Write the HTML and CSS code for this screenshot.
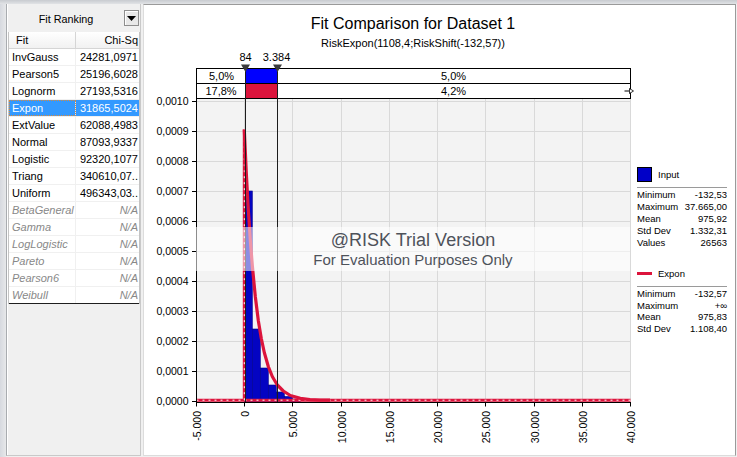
FILE: index.html
```html
<!DOCTYPE html>
<html lang="en">
<head>
<meta charset="utf-8">
<title>Fit Comparison for Dataset 1</title>
<link rel="stylesheet" href="styles.css">
</head>
<body>
<div class="app">
  <aside class="ranking">
    <div class="rank-head">
      <span class="rank-title">Fit Ranking</span>
      <button class="drop" type="button" aria-label="Fit ranking options">
        <svg width="9" height="5" viewBox="0 0 9 5"><path d="M0 0H9L4.5 5Z" fill="#000"/></svg>
      </button>
    </div>
    <div class="fit-table">
      <div class="row head"><span class="c1">Fit</span><span class="c2">Chi-Sq</span></div>
      <div class="row"><span class="c1">InvGauss</span><span class="c2">24281,0971</span></div>
      <div class="row"><span class="c1">Pearson5</span><span class="c2">25196,6028</span></div>
      <div class="row"><span class="c1">Lognorm</span><span class="c2">27193,5316</span></div>
      <div class="row sel"><span class="c1">Expon</span><span class="c2">31865,5024</span></div>
      <div class="row"><span class="c1">ExtValue</span><span class="c2">62088,4983</span></div>
      <div class="row"><span class="c1">Normal</span><span class="c2">87093,9337</span></div>
      <div class="row"><span class="c1">Logistic</span><span class="c2">92320,1077</span></div>
      <div class="row"><span class="c1">Triang</span><span class="c2">340610,07..</span></div>
      <div class="row"><span class="c1">Uniform</span><span class="c2">496343,03..</span></div>
      <div class="row na"><span class="c1">BetaGeneral</span><span class="c2">N/A</span></div>
      <div class="row na"><span class="c1">Gamma</span><span class="c2">N/A</span></div>
      <div class="row na"><span class="c1">LogLogistic</span><span class="c2">N/A</span></div>
      <div class="row na"><span class="c1">Pareto</span><span class="c2">N/A</span></div>
      <div class="row na"><span class="c1">Pearson6</span><span class="c2">N/A</span></div>
      <div class="row na last"><span class="c1">Weibull</span><span class="c2">N/A</span></div>
    </div>
  </aside>

  <section class="chart">
    <header class="chart-head">
      <h1 class="title">Fit Comparison for Dataset 1</h1>
      <p class="subtitle">RiskExpon(1108,4;RiskShift(-132,57))</p>
    </header>
    <div class="chart-body">
      <div class="plot">
        <svg class="plot-svg" width="493" height="406" viewBox="144 49 493 406">
          <!-- plot background and grid -->
          <rect x="196.5" y="98.5" width="434" height="303" fill="#f3f3f3"/>
          <g stroke="#d9d9d9" stroke-width="1">
            <path d="M196.5 101.5H630.5M196.5 131.5H630.5M196.5 161.5H630.5M196.5 191.5H630.5M196.5 221.5H630.5M196.5 251.5H630.5M196.5 281.5H630.5M196.5 311.5H630.5M196.5 341.5H630.5M196.5 371.5H630.5"/>
            <path d="M244.5 98.5V401.5M292.5 98.5V401.5M341.5 98.5V401.5M389.5 98.5V401.5M437.5 98.5V401.5M485.5 98.5V401.5M534.5 98.5V401.5M582.5 98.5V401.5M630.5 98.5V401.5"/>
          </g>

          <!-- histogram -->
          <g fill="#0404c2" stroke="#00008c" stroke-width="0.6">
            <rect x="244" y="191" width="8.3" height="210.5"/>
            <rect x="252.3" y="329" width="8" height="72.5"/>
            <rect x="260.3" y="368" width="8" height="33.5"/>
            <rect x="268.3" y="385" width="8" height="16.5"/>
            <rect x="276.3" y="392" width="8" height="9.5"/>
            <rect x="284.3" y="396.5" width="8" height="5"/>
            <rect x="292.3" y="399" width="8" height="2.5"/>
          </g>

          <!-- fitted curve -->
          <path d="M196.5 400.2H630.5M244.3 400.2V129.5" stroke="#dc143c" stroke-width="3" fill="none"/>
          <path d="M196.5 400.2H630.5M244.3 400.2V129.5" stroke="#fff" stroke-width="1" stroke-dasharray="2 4" fill="none"/>
          <polyline fill="none" stroke="#dc143c" stroke-width="3.2" stroke-linejoin="round"
            points="244.3,129.5 246.3,173 248.3,209.5 250.3,240 252.3,265.5 255.3,296.5 258.3,320.5 261.3,338.5 264.3,352.5 268.3,366.5 272.3,376.5 277.3,385 283.3,391 290.3,395.5 300.3,398.3 310,399.6 320,400.1 330,400.2"/>

          <!-- axes -->
          <g stroke="#000" stroke-width="1" fill="none">
            <path d="M196.5 98.5V402.5M196 402.5H631"/>
            <path d="M192 101.5H196.5M192 131.5H196.5M192 161.5H196.5M192 191.5H196.5M192 221.5H196.5M192 251.5H196.5M192 281.5H196.5M192 311.5H196.5M192 341.5H196.5M192 371.5H196.5M192 401.5H196.5"/>
            <path d="M196.5 402V406.5M244.5 402V406.5M292.5 402V406.5M341.5 402V406.5M389.5 402V406.5M437.5 402V406.5M485.5 402V406.5M534.5 402V406.5M582.5 402V406.5M630.5 402V406.5"/>
          </g>
          <g class="ylab" text-anchor="end">
            <text x="188.5" y="105.3">0,0010</text>
            <text x="188.5" y="135.3">0,0009</text>
            <text x="188.5" y="165.3">0,0008</text>
            <text x="188.5" y="195.3">0,0007</text>
            <text x="188.5" y="225.3">0,0006</text>
            <text x="188.5" y="255.3">0,0005</text>
            <text x="188.5" y="285.3">0,0004</text>
            <text x="188.5" y="315.3">0,0003</text>
            <text x="188.5" y="345.3">0,0002</text>
            <text x="188.5" y="375.3">0,0001</text>
            <text x="188.5" y="405.3">0,0000</text>
          </g>
          <g class="xlab" text-anchor="end">
            <text x="201" y="411" transform="rotate(-90 201 411)">-5.000</text>
            <text x="249" y="411" transform="rotate(-90 249 411)">0</text>
            <text x="297" y="411" transform="rotate(-90 297 411)">5.000</text>
            <text x="346" y="411" transform="rotate(-90 346 411)">10.000</text>
            <text x="394" y="411" transform="rotate(-90 394 411)">15.000</text>
            <text x="442" y="411" transform="rotate(-90 442 411)">20.000</text>
            <text x="490" y="411" transform="rotate(-90 490 411)">25.000</text>
            <text x="539" y="411" transform="rotate(-90 539 411)">30.000</text>
            <text x="587" y="411" transform="rotate(-90 587 411)">35.000</text>
            <text x="635" y="411" transform="rotate(-90 635 411)">40.000</text>
          </g>

          <!-- delimiter bars -->
          <rect x="196.5" y="68.5" width="434" height="30" fill="#fff" stroke="#000"/>
          <rect x="246" y="69" width="31.5" height="14.5" fill="#0000ff"/>
          <rect x="246" y="84" width="31.5" height="14" fill="#dc143c"/>
          <path d="M196.5 83.5H630.5" stroke="#000"/>
          <path d="M245.5 68.5V402M277.5 68.5V402" stroke="#1c1c1c" stroke-width="1"/>
          <path d="M241 64.5H250L245.5 72Z M273 64.5H282L277.5 72Z" fill="#3c3c3c"/>
          <path d="M624.5 91H629" stroke="#000"/>
          <path d="M629.5 88.5L633.5 91L629.5 93.5Z" fill="#fff" stroke="#000" stroke-width="0.8"/>
          <g class="dlab" text-anchor="middle">
            <text x="245.5" y="61">84</text>
            <text x="276.5" y="61">3.384</text>
            <text x="221.5" y="80">5,0%</text>
            <text x="221" y="95">17,8%</text>
            <text x="453.5" y="80">5,0%</text>
            <text x="453.5" y="95">4,2%</text>
          </g>
        </svg>
        <div class="watermark">
          <p class="wm-main">@RISK Trial Version</p>
          <p class="wm-sub">For Evaluation Purposes Only</p>
        </div>
      </div>

      <aside class="legend">
        <div class="key"><span class="swatch"></span><span>Input</span></div>
        <div class="rule"></div>
        <dl class="stats">
          <div class="stat"><dt>Minimum</dt><dd>-132,53</dd></div>
          <div class="stat"><dt>Maximum</dt><dd>37.665,00</dd></div>
          <div class="stat"><dt>Mean</dt><dd>975,92</dd></div>
          <div class="stat"><dt>Std Dev</dt><dd>1.332,31</dd></div>
          <div class="stat"><dt>Values</dt><dd>26563</dd></div>
        </dl>
        <div class="key key-fit"><span class="line-swatch"></span><span>Expon</span></div>
        <div class="rule"></div>
        <dl class="stats stats-fit">
          <div class="stat"><dt>Minimum</dt><dd>-132,57</dd></div>
          <div class="stat"><dt>Maximum</dt><dd>+∞</dd></div>
          <div class="stat"><dt>Mean</dt><dd>975,83</dd></div>
          <div class="stat"><dt>Std Dev</dt><dd>1.108,40</dd></div>
        </dl>
      </aside>
    </div>
  </section>
</div>
</body>
</html>
```

FILE: styles.css
```css
* { box-sizing: border-box; }

html, body { margin: 0; padding: 0; }

body {
  width: 737px;
  height: 457px;
  overflow: hidden;
  font-family: "Liberation Sans", Arial, sans-serif;
  font-size: 11px;
  color: #000;
  background:
    linear-gradient(#c8cbd0, #e1e3e6) no-repeat 0 0 / 100% 4px,
    linear-gradient(90deg, #d6d9df, #e7e8ea 6px, #f0f0f0 6px);
}

.app {
  display: flex;
  height: 457px;
  padding: 4px 1px 1px 6px;
}

/* ---------- left ranking panel ---------- */
.ranking {
  width: 135px;
  flex: none;
  display: flex;
  flex-direction: column;
  background: #f0f0f0;
  border-left: 1px solid #a9acb0;
  border-right: 1px solid #c9c9c9;
  border-bottom: 1px solid #c9c9c9;
  padding-left: 1px;
  box-shadow: inset 1px 0 #ffffff;
}

.rank-head {
  height: 28px;
  display: flex;
  align-items: center;
}

.rank-title {
  flex: 1;
  text-align: center;
  font-size: 10.8px;
  padding-top: 1px;
}

.drop {
  width: 15px;
  height: 16px;
  margin: 0 1px 0 0;
  padding: 0;
  border: 1px solid #8e8e8e;
  background: #e8e8e8;
  box-shadow: inset 1px 1px #ffffff;
  display: flex;
  align-items: center;
  justify-content: center;
}

.drop svg { display: block; }

.fit-table {
  width: 132px;
  background: #fff;
  border-left: 1px solid #c4c4c4;
  border-right: 1px solid #c4c4c4;
}

.row {
  display: flex;
  height: 17px;
  line-height: 16px;
  border-bottom: 1px solid #f0f0f0;
  white-space: nowrap;
}

.c1 {
  width: 67px;
  flex: none;
  padding-left: 3px;
  border-right: 1px solid #f0f0f0;
  overflow: hidden;
}

.c2 {
  flex: 1;
  text-align: right;
  padding-right: 1px;
  overflow: hidden;
}

.row.head {
  background: linear-gradient(#ffffff, #f1f1f1);
  border-bottom-color: #d5d5d5;
}

.row.head .c1 {
  padding-left: 7px;
  border-right-color: #d5d5d5;
}

.row.sel .c1,
.row.sel .c2 {
  background: #3399ff;
  color: #fff;
}

.row.sel .c1 {
  outline: 1px dotted #d98a3c;
  outline-offset: -1px;
  border-right-color: #cfe5ff;
}

.row.na {
  color: #888;
  font-style: italic;
}

.row.last { border-bottom: 1px solid #1e1e1e; }

/* ---------- chart panel ---------- */
.chart {
  flex: 1;
  margin-left: 2px;
  display: flex;
  flex-direction: column;
  background: #fff;
  border-top: 1px solid #9a9a9a;
  border-right: 1px solid #9a9a9a;
  border-left: 1px solid #dcdcdc;
  border-bottom: 1px solid #dcdcdc;
}

.chart-head {
  height: 44px;
  flex: none;
  padding: 8px 105px 0 52px;
  text-align: center;
}

.title {
  margin: 0;
  font-size: 16px;
  font-weight: normal;
  line-height: 21px;
}

.subtitle {
  margin: 1.5px 0 0;
  font-size: 11px;
  line-height: 14px;
}

.chart-body {
  flex: 1;
  display: flex;
}

.plot {
  position: relative;
  width: 493px;
  height: 406px;
  flex: none;
}

.plot-svg { display: block; }

.plot-svg text {
  font-family: "Liberation Sans", Arial, sans-serif;
  font-size: 10.5px;
  fill: #000;
}

.plot-svg .dlab text { font-size: 11px; }

.watermark {
  position: absolute;
  left: 52px;
  top: 178px;
  width: 434px;
  height: 44px;
  background: rgba(255, 255, 255, 0.55);
  text-align: center;
  color: #4e525a;
  padding-top: 3px;
}

.watermark p { margin: 0; }

.wm-main {
  font-size: 18px;
  line-height: 20px;
}

.wm-sub {
  font-size: 15px;
  line-height: 18px;
  margin-top: 1px !important;
}

/* ---------- legend ---------- */
.legend {
  width: 98px;
  flex: none;
  padding: 118px 8px 0 0;
  font-size: 9.5px;
}

.key {
  display: flex;
  align-items: center;
  gap: 6px;
  height: 15px;
}

.swatch {
  width: 15px;
  height: 15px;
  background: #0000c8;
  border: 1px solid #000;
}

.line-swatch {
  width: 15px;
  height: 3px;
  background: #dc143c;
}

.key-fit { margin-top: 17px; }

.rule {
  border-top: 1px solid #9a9a9a;
  margin-top: 5px;
}

.stats {
  margin: 1px 0 0;
}

.stat {
  display: flex;
  justify-content: space-between;
  height: 12px;
  line-height: 12px;
}

.stats-fit .stat {
  height: 11.5px;
  line-height: 11.5px;
}

.stat dt, .stat dd { margin: 0; }
```
